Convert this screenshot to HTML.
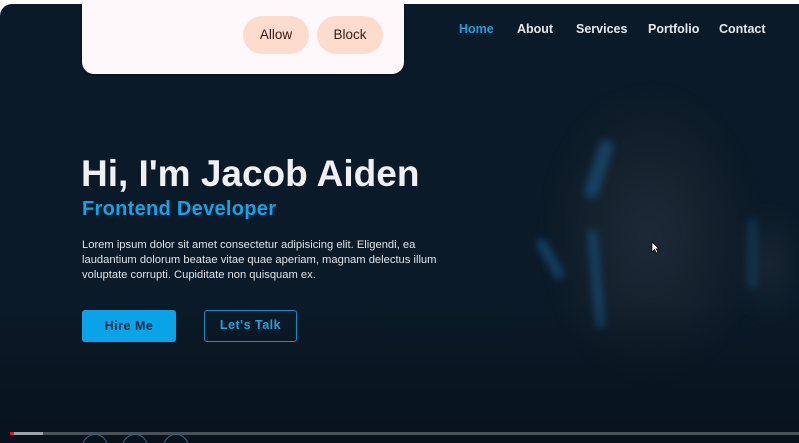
<!DOCTYPE html>
<html><head><meta charset="utf-8"><style>
*{margin:0;padding:0;box-sizing:border-box}
html,body{width:799px;height:443px;overflow:hidden}
body{background:#fff;font-family:"Liberation Sans",sans-serif;position:relative}
.page{position:absolute;left:0;top:4px;width:799px;height:439px;background:#0b1a28;border-top-left-radius:12px;overflow:hidden}
.bottomfade{position:absolute;left:0;top:300px;width:799px;height:139px;background:linear-gradient(#0b1a2800,#07121c)}
.face{position:absolute;left:500px;top:30px;width:300px;height:370px;
background:radial-gradient(ellipse 110px 150px at 150px 200px,#1c2a38 0%,#16232f 45%,#0b1a2800 100%),radial-gradient(ellipse 40px 60px at 270px 230px,#172533,#0b1a2800);filter:blur(3px)}
.stripe{position:absolute;background:#17557e;filter:blur(4px);border-radius:6px;opacity:.65}
.nav{position:absolute;top:18px;font-size:12.5px;font-weight:bold;color:#e4e8ee}
h1{position:absolute;left:81px;top:149px;font-size:37px;color:#eef0f3;font-weight:bold;letter-spacing:0;white-space:nowrap}
h2{position:absolute;left:82px;top:194px;font-size:20px;color:#0ea5e9;font-weight:bold;white-space:nowrap;letter-spacing:.3px}
p{position:absolute;left:82px;top:234px;width:372px;font-size:11.2px;line-height:15px;color:#dfe3e8}
.btn{position:absolute;top:306px;height:32px;border-radius:3px;font-size:12.5px;font-weight:bold;text-align:center;line-height:32px;letter-spacing:.5px}
.popup{position:absolute;left:82px;top:0;width:322px;height:74px;background:#fff8fb;border-radius:0 0 12px 12px;box-shadow:0 1px 2px #0006}
.pb{position:absolute;top:16px;width:66px;height:38px;border-radius:19px;background:#fddccd;color:#3a1b14;font-size:13.5px;text-align:center;line-height:38px}
.bar{position:absolute;left:10px;top:432px;width:789px;height:3px;background:#4a5058}
.circ{position:absolute;top:434px;width:26px;height:26px;border:1.5px solid #2f6684;border-radius:50%}
</style></head><body>
<div class="page">
<div class="face"></div>
<div class="stripe" style="left:592px;top:135px;width:14px;height:60px;transform:rotate(18deg)"></div>
<div class="stripe" style="left:592px;top:225px;width:9px;height:100px;transform:rotate(-5deg)"></div>
<div class="stripe" style="left:545px;top:232px;width:10px;height:45px;transform:rotate(-30deg)"></div>
<div class="stripe" style="left:748px;top:215px;width:9px;height:70px;opacity:.4"></div>
<div class="bottomfade"></div>
<div class="nav" style="left:459px;color:#1ea0dc">Home</div>
<div class="nav" style="left:517px">About</div>
<div class="nav" style="left:576px">Services</div>
<div class="nav" style="left:648px">Portfolio</div>
<div class="nav" style="left:719px">Contact</div>
<h1>Hi, I'm Jacob Aiden</h1>
<h2>Frontend Developer</h2>
<p>Lorem ipsum dolor sit amet consectetur adipisicing elit. Eligendi, ea laudantium dolorum beatae vitae quae aperiam, magnam delectus illum voluptate corrupti. Cupiditate non quisquam ex.</p>
<div class="btn" style="left:82px;width:94px;background:#0aa3e8;color:#0b2a40">Hire Me</div>
<div class="btn" style="left:204px;width:93px;border:1.5px solid #1a8cc4;color:#22a3e0;line-height:29px">Let's Talk</div>
<svg style="position:absolute;left:651px;top:237px" width="9" height="13" viewBox="0 0 9 13"><path d="M1 1v10l2.5-2.5 2 3.5 1.5-.8-2-3.3H8z" fill="#fff" stroke="#000" stroke-width=".7"/></svg>
</div>
<div class="popup">
<div class="pb" style="left:161px">Allow</div>
<div class="pb" style="left:235px">Block</div>
</div>
<div class="bar"></div>
<div style="position:absolute;left:10px;top:432px;width:4px;height:3px;background:#e3122c"></div>
<div style="position:absolute;left:14px;top:432px;width:29px;height:3px;background:#a0a4a9"></div>
<div class="circ" style="left:82px"></div>
<div class="circ" style="left:122px"></div>
<div class="circ" style="left:163px"></div>
</body></html>
